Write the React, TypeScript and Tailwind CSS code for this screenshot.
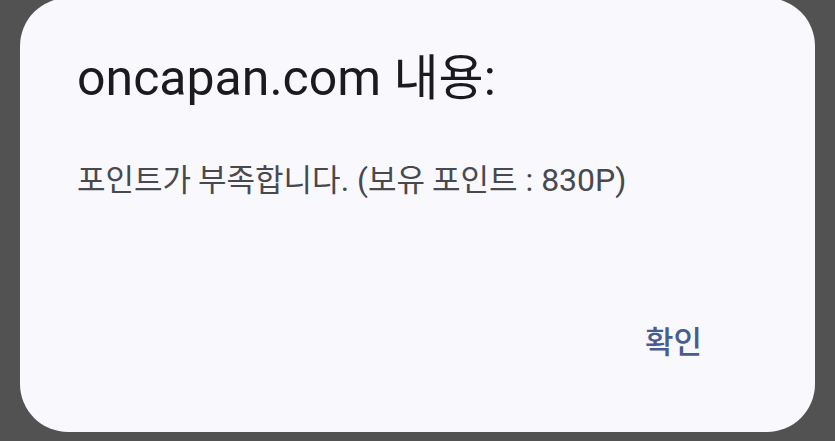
export default function App() {
  return (
    <div className="w-[835px] h-[441px] overflow-hidden bg-[#525252] px-[20px]">
      <div className="-mt-[2px] h-[434px] rounded-[48px] bg-[#f8f8fd] flex flex-col pl-[57px] pr-[60px]">
        {/* title */}
        <h1 className="mt-[46px] text-[#1b1b1f] leading-[60px] whitespace-nowrap" style={{ fontFamily: 'Roboto, "Noto Sans CJK KR", sans-serif' }}>
          <span className="text-[50px]">oncapan.com </span>
          <span className="text-[49px]" style={{ fontFamily: '"Noto Sans CJK KR", sans-serif' }}>내용</span>
          <span className="text-[50px]">:</span>
        </h1>

        {/* message */}
        <p className="mt-[38px] text-[#48494d] leading-[40px] whitespace-nowrap" style={{ fontFamily: 'Roboto, "Noto Sans CJK KR", sans-serif' }}>
          <span className="text-[31px]" style={{ fontFamily: '"Noto Sans CJK KR", sans-serif' }}>포인트가 부족합니다</span>
          <span className="text-[32px]">. (</span>
          <span className="text-[31px]" style={{ fontFamily: '"Noto Sans CJK KR", sans-serif' }}>보유 포인트</span>
          <span className="text-[32px]"> : 830P)</span>
        </p>

        {/* actions */}
        <div className="mt-auto mb-[72px] flex justify-end">
          <button className="mr-[53px] text-[31px] font-medium text-[#485c8f] leading-[40px]" style={{ fontFamily: '"Noto Sans CJK KR", sans-serif' }}>
            확인
          </button>
        </div>
      </div>
    </div>
  );
}
